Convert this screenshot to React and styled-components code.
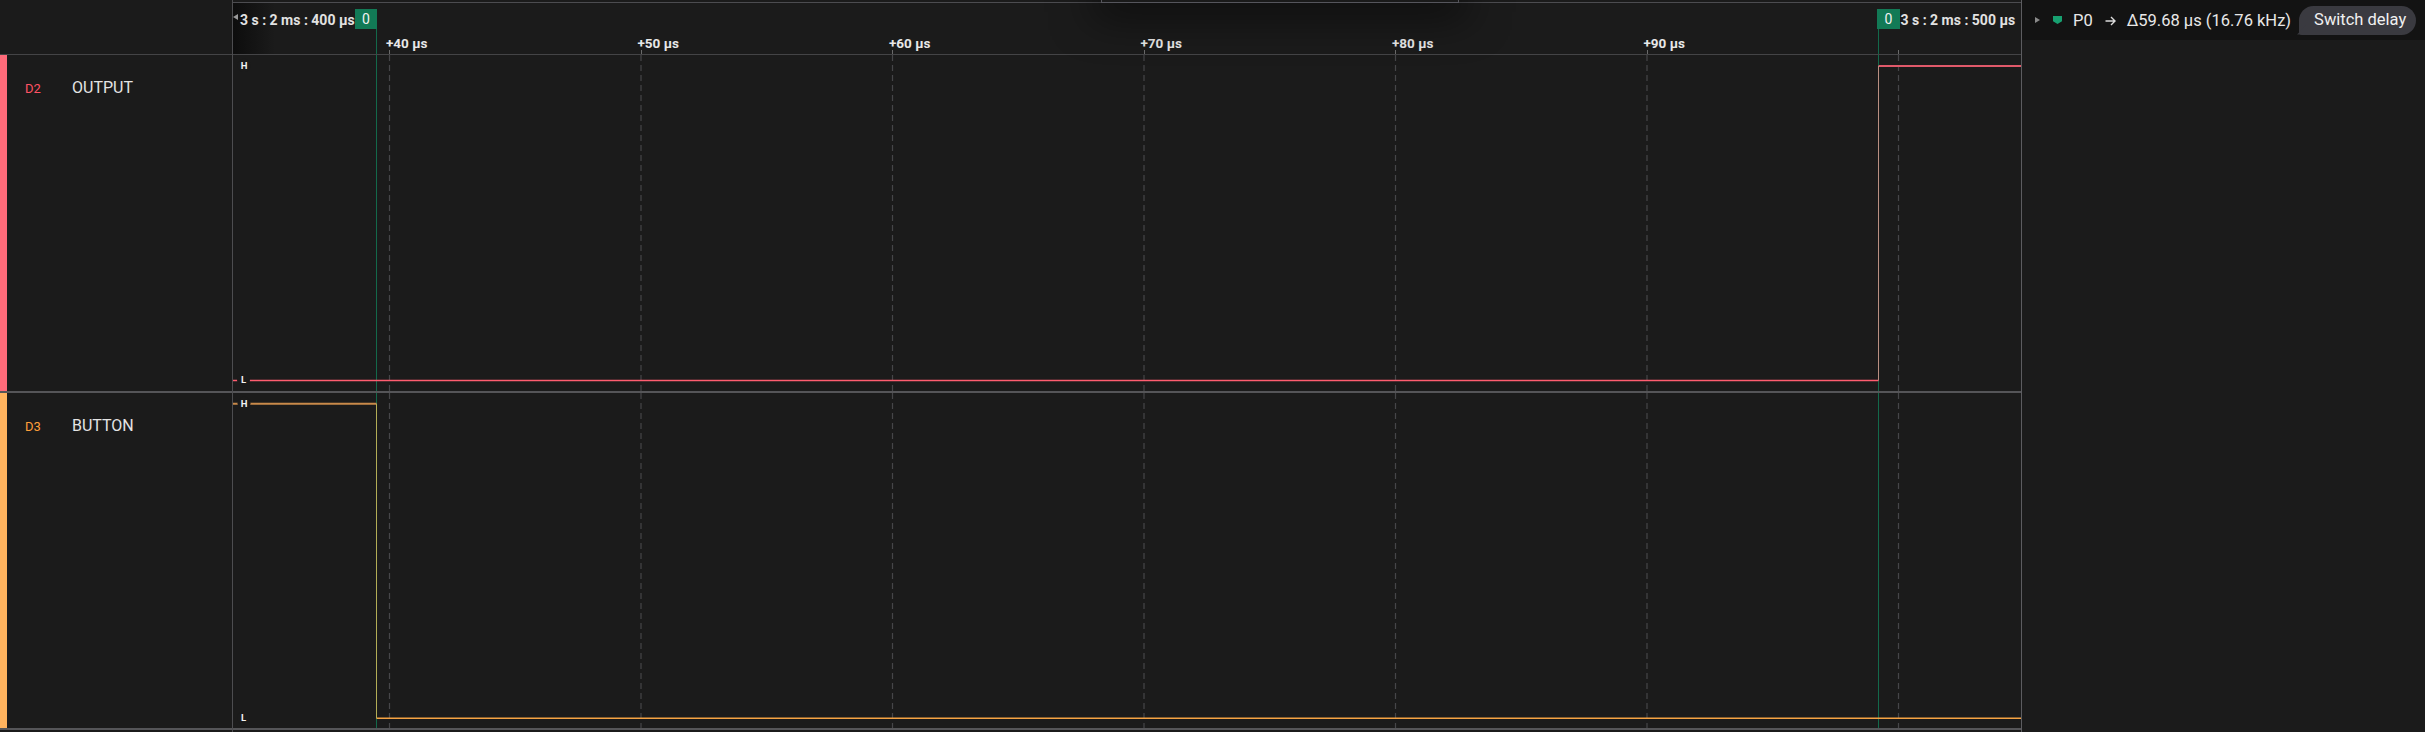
import React from "react";
import styled, { createGlobalStyle } from "styled-components";

const GlobalStyle = createGlobalStyle`
  html, body {
    margin: 0;
    padding: 0;
    background: #1b1b1b;
  }
  body {
    font-family: Roboto, "Liberation Sans", sans-serif;
    color: #e6e6e6;
  }
`;

// timeline geometry (px inside the waveform area)
const TIMELINE_W = 1788;
const GRID0 = 156.5;
const GRID_STEP = 251.5;
const MARK_A = 143.5;
const MARK_B = 1645.5;

const ticks = [40, 50, 60, 70, 80, 90, 100].map((t, i) => ({
  label: `+${t} µs`,
  x: GRID0 + i * GRID_STEP,
  show: t < 100,
}));

const channels = [
  {
    id: "D2",
    name: "OUTPUT",
    bar: "#ff6b7a",
    idColor: "#ff5264",
    height: 336,
    highY: 11,
    lowY: 325.5,
    highColor: "#e0596a",
    lowColor: "#ff5d70",
    edgeColor: "#b98f82",
    // low until MARK_B, then high
    low: `M0 325.5 H${MARK_B}`,
    high: `M${MARK_B} 11 H${TIMELINE_W}`,
    edge: MARK_B,
  },
  {
    id: "D3",
    name: "BUTTON",
    bar: "#ffb35e",
    idColor: "#ff9f3a",
    height: 335,
    highY: 10.7,
    lowY: 325.3,
    highColor: "#c98a4a",
    lowColor: "#f6a343",
    edgeColor: "#b3ad56",
    low: `M${MARK_A} 325.3 H${TIMELINE_W}`,
    high: `M0 10.7 H${MARK_A}`,
    edge: MARK_A,
  },
];

const App = styled.div`
  position: relative;
  display: flex;
  width: 2425px;
  height: 732px;
  overflow: hidden;
  background: #1b1b1b;
`;

const TopPopupEdge = styled.div`
  position: absolute;
  left: 1101px;
  top: -12px;
  width: 356px;
  height: 13px;
  border: 1px solid #55555c;
  background: #1a1a1a;
  box-shadow: 0 6px 40px 8px rgba(0, 0, 0, 0.55);
  z-index: 5;
`;

/* ---------- left channel list ---------- */

const LeftPanel = styled.div`
  flex: 0 0 232px;
  display: flex;
  flex-direction: column;
  border-right: 1px solid #4d4d50;
`;

const LeftHeader = styled.div`
  height: 54px;
  border-bottom: 1px solid #444446;
`;

const ChannelRow = styled.div`
  display: flex;
  height: ${(p) => p.$h}px;
  border-bottom: 2px solid #555558;
`;

const ColorBar = styled.div`
  flex: 0 0 7px;
  background: ${(p) => p.$color};
`;

const ChannelInfo = styled.div`
  display: flex;
  align-items: center;
  height: 20px;
  margin-top: 22px;
  padding-left: 18px;
`;

const ChannelId = styled.span`
  width: 47px;
  padding-top: 2px;
  font-size: 13px;
  color: ${(p) => p.$color};
`;

const ChannelName = styled.span`
  font-size: 16px;
  color: #e4e4e4;
`;

/* ---------- timeline ---------- */

const Timeline = styled.div`
  flex: 0 0 ${TIMELINE_W}px;
  display: flex;
  flex-direction: column;
  border-right: 1px solid #5c5c60;
`;

const TimeHeader = styled.div`
  position: relative;
  margin-top: 2px;
  height: 51px;
  border-top: 1px solid #4c4c50;
  border-bottom: 1px solid #444446;
  background: linear-gradient(90deg, #0d0d0d 0, rgba(27, 27, 27, 0) 42px),
    #1b1b1b;
`;

const Stamp = styled.div`
  position: absolute;
  top: 7px;
  left: ${(p) => p.$x}px;
  display: flex;
  align-items: center;
  gap: 2px;
  height: 20px;
  font-size: 14px;
  font-weight: 700;
  color: #e2e2e2;
  white-space: nowrap;
`;

const LeftCaret = styled.span`
  width: 0;
  height: 0;
  margin-top: -6px;
  border-top: 3px solid transparent;
  border-bottom: 3px solid transparent;
  border-right: 5px solid #9a9a9a;
`;

const MarkerBox = styled.div`
  position: absolute;
  top: 6px;
  left: ${(p) => p.$x}px;
  width: ${(p) => p.$w}px;
  height: 20px;
  display: flex;
  align-items: center;
  justify-content: center;
  background: #127a56;
  color: #f2f2f2;
  font-size: 14px;
  z-index: 2;
`;

const MarkerStem = styled.div`
  position: absolute;
  top: 26px;
  bottom: 0;
  left: ${(p) => p.$x}px;
  width: 1px;
  background: #13694b;
`;

const TickLabel = styled.span`
  position: absolute;
  top: 32px;
  left: ${(p) => p.$x - 3.5}px;
  font-size: 13.5px;
  line-height: 16px;
  font-weight: 700;
  color: #e8e8e8;
  white-space: nowrap;
`;

const Tick = styled.div`
  position: absolute;
  bottom: 0;
  left: ${(p) => p.$x - 0.5}px;
  width: 1px;
  height: 4px;
  background: #6a6a6a;
`;

const WaveRow = styled.div`
  height: ${(p) => p.$h}px;
  border-bottom: 2px solid #555558;

  svg {
    display: block;
  }
`;

/* ---------- right measurement panel ---------- */

const RightPanel = styled.div`
  flex: 1;
  display: flex;
  flex-direction: column;
`;

const MeasureBar = styled.div`
  height: 40px;
  display: flex;
  align-items: center;
  padding-left: 13px;
  background: #131313;
  font-size: 16.5px;
  color: #e8e8e8;
`;

const Expand = styled.span`
  width: 0;
  height: 0;
  margin-right: 13px;
  border-top: 3.5px solid transparent;
  border-bottom: 3.5px solid transparent;
  border-left: 5px solid #8a8a8a;
`;

const PinMark = styled.span`
  width: 9px;
  height: 8px;
  margin-right: 11px;
  background: #17a070;
  clip-path: polygon(0 0, 100% 0, 100% 65%, 50% 100%, 0 65%);
`;

const ArrowIcon = styled.svg`
  margin: 1px 11px 0 12px;
  flex: 0 0 auto;
`;

const Pill = styled.button`
  position: relative;
  margin-left: 8px;
  height: 29px;
  padding: 0 10px 1px 15px;
  border: none;
  border-radius: 15px 15px 15px 3px;
  background: #3a3a40;
  color: #f0f0f0;
  font-family: inherit;
  font-size: 16.5px;

  &::before {
    content: "";
    position: absolute;
    left: -2px;
    bottom: 0;
    width: 10px;
    height: 10px;
    background: #3a3a40;
    clip-path: polygon(0 100%, 100% 0, 100% 100%);
  }
`;

const LevelTag = ({ x, y, text }) => (
  <g>
    <circle cx={x} cy={y} r="6.5" fill="#1b1b1b" />
    <text
      x={x}
      y={y + 3.4}
      textAnchor="middle"
      fontSize="9.5"
      fontWeight="700"
      fontFamily="Roboto, sans-serif"
      fill="#f2f2f2"
    >
      {text}
    </text>
  </g>
);

const Waveform = ({ ch }) => {
  const h = ch.height;
  return (
    <svg width={TIMELINE_W} height={h}>
      {ticks.map((t) => (
        <line
          key={t.label}
          x1={t.x}
          x2={t.x}
          y1="0"
          y2={h}
          stroke="#464649"
          strokeWidth="1.2"
          strokeDasharray="6 4"
        />
      ))}
      <line x1={MARK_A} x2={MARK_A} y1="0" y2={h} stroke="#13694b" />
      <line x1={MARK_B} x2={MARK_B} y1="0" y2={h} stroke="#13694b" />
      <path d={ch.low} stroke={ch.lowColor} strokeWidth="1.5" fill="none" />
      <path d={ch.high} stroke={ch.highColor} strokeWidth="2" fill="none" />
      <line
        x1={ch.edge}
        x2={ch.edge}
        y1={ch.highY}
        y2={ch.lowY}
        stroke={ch.edgeColor}
        strokeWidth="1"
      />
      <LevelTag x={11} y={10.3} text="H" />
      <LevelTag x={10.5} y={325} text="L" />
    </svg>
  );
};

export default function LogicView() {
  return (
    <>
      <GlobalStyle />
      <App>
        <TopPopupEdge />
        <LeftPanel>
          <LeftHeader />
          {channels.map((ch) => (
            <ChannelRow key={ch.id} $h={ch.height}>
              <ColorBar $color={ch.bar} />
              <ChannelInfo>
                <ChannelId $color={ch.idColor}>{ch.id}</ChannelId>
                <ChannelName>{ch.name}</ChannelName>
              </ChannelInfo>
            </ChannelRow>
          ))}
        </LeftPanel>

        <Timeline>
          <TimeHeader>
            <Stamp $x={0}>
              <LeftCaret />
              <span>3 s : 2 ms : 400 µs</span>
            </Stamp>
            <MarkerBox $x={MARK_A - 21.5} $w={22}>
              0
            </MarkerBox>
            <MarkerStem $x={MARK_A - 0.5} />
            <MarkerBox $x={MARK_B - 1.5} $w={23}>
              0
            </MarkerBox>
            <MarkerStem $x={MARK_B - 0.5} />
            <Stamp $x={MARK_B + 22}>
              <span>3 s : 2 ms : 500 µs</span>
            </Stamp>
            {ticks.map((t) => (
              <React.Fragment key={t.label}>
                {t.show && <TickLabel $x={t.x}>{t.label}</TickLabel>}
                <Tick $x={t.x} />
              </React.Fragment>
            ))}
          </TimeHeader>
          {channels.map((ch) => (
            <WaveRow key={ch.id} $h={ch.height}>
              <Waveform ch={ch} />
            </WaveRow>
          ))}
        </Timeline>

        <RightPanel>
          <MeasureBar>
            <Expand />
            <PinMark />
            <span>P0</span>
            <ArrowIcon width="11" height="10" viewBox="0 0 11 10">
              <path
                d="M0.5 5 H10 M6 1 L10 5 L6 9"
                stroke="#dcdcdc"
                strokeWidth="1.4"
                fill="none"
              />
            </ArrowIcon>
            <span>Δ59.68 µs (16.76 kHz)</span>
            <Pill>Switch delay</Pill>
          </MeasureBar>
        </RightPanel>
      </App>
    </>
  );
}
